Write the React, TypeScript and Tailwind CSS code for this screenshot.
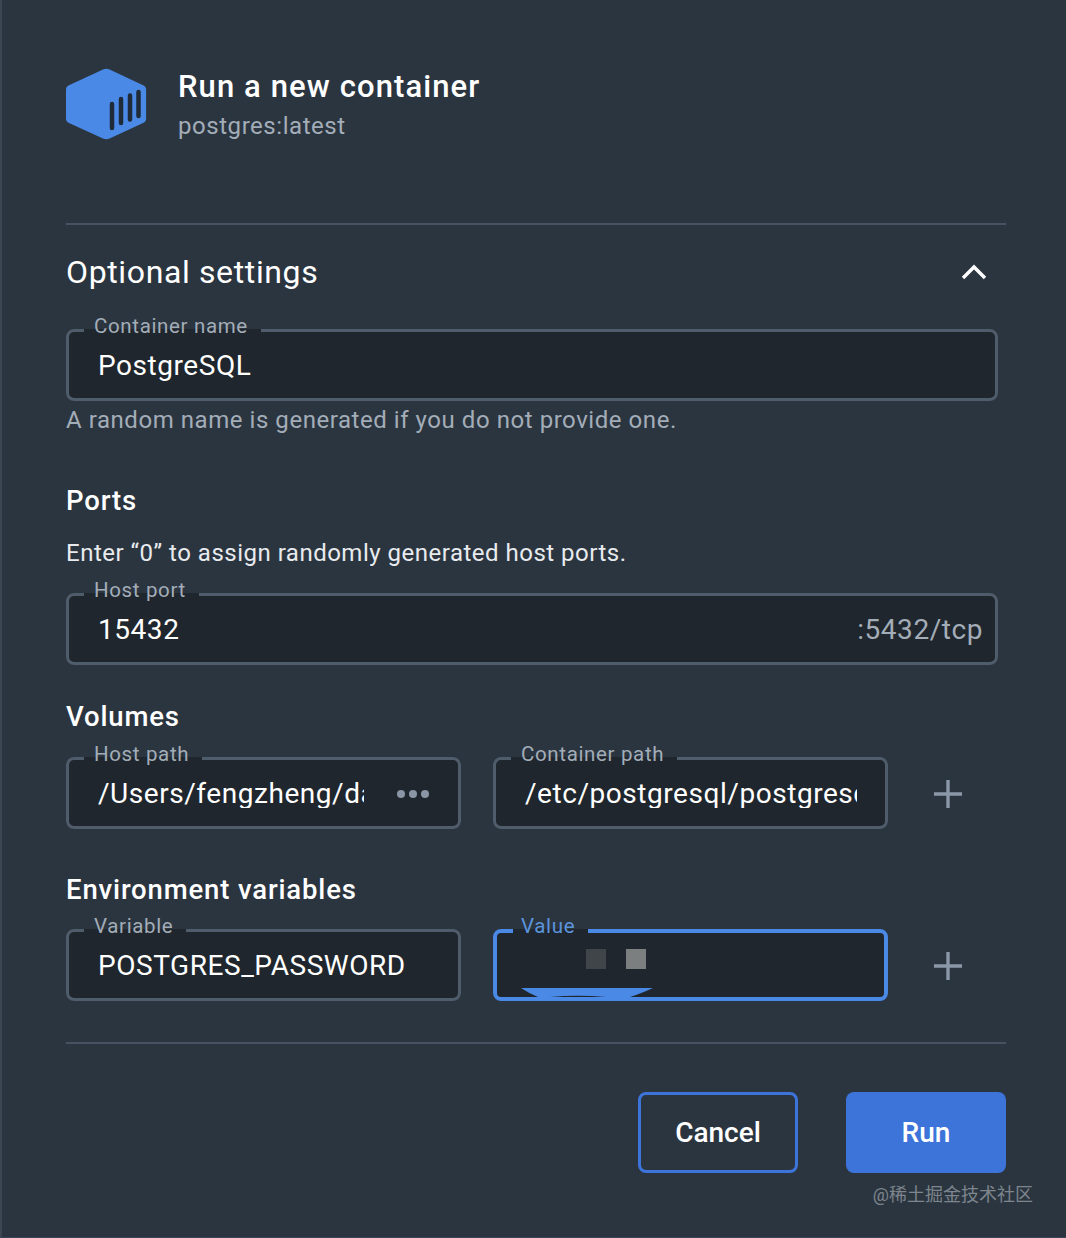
import { ReactNode } from "react";

function Field({
  label,
  children,
  focused = false,
  className = "",
}: {
  label: string;
  children: ReactNode;
  focused?: boolean;
  className?: string;
}) {
  return (
    <fieldset
      className={`h-[83px] min-w-0 rounded-lg bg-[#1f262d] ${
        focused ? "border-[4px] border-[#4a8ae6] px-[28px]" : "border-[3px] border-[#4f5c6b] px-[29px]"
      } ${className}`}
    >
      <legend
        className={`pr-[13px] text-[20.5px] leading-[16px] tracking-[0.65px] ${
          focused ? "ml-[-12px] h-[26px] pl-[8px] text-[#5b94dc]" : "ml-[-14px] h-[25px] pl-[10px] text-[#a3adb8]"
        }`}
      >
        {label}
      </legend>
      <div className="flex h-[46px] items-center text-[28px] leading-none tracking-[0.55px] text-white">
        {children}
      </div>
    </fieldset>
  );
}

function Plus() {
  return (
    <svg width="30" height="30" viewBox="0 0 30 30" className="ml-[45px] shrink-0">
      <path d="M15 1v28M1 15h28" stroke="#8b98a8" strokeWidth="3.4" />
    </svg>
  );
}

function ContainerIcon() {
  return (
    <svg width="81" height="72" viewBox="0 0 81 72" className="shrink-0">
      <path
        d="M37 1.6a8 8 0 0 1 6.6 0l33.5 15.6a5 5 0 0 1 3 4.6v28.6a5 5 0 0 1-3 4.6L43.6 70.4a8 8 0 0 1-6.6 0L3 55a5 5 0 0 1-3-4.6V21.8a5 5 0 0 1 3-4.6z"
        fill="#4a8ae6"
      />
      <g stroke="#1f2b38" strokeWidth="4.5" strokeLinecap="round">
        <path d="M46 36v24M55 31v24M64 27.5v24M72.5 24v24" />
      </g>
    </svg>
  );
}

export default function App() {
  return (
    <div className="h-[1238px] w-[1066px] overflow-hidden border-b border-l-2 border-[#3c4551] bg-[#2b3540] pl-[64px] pr-[60px] font-['Roboto',sans-serif] text-white">
      <div className="flex h-[225px] border-b-2 border-[#465261] pt-[68px]">
        <ContainerIcon />
        <div className="ml-[31px]">
          <div className="text-[31px] font-medium leading-[38px] tracking-[1.1px]">
            Run a new container
          </div>
          <div className="mt-[3px] text-[24px] leading-[34px] tracking-[0.55px] text-[#a3adb8]">
            postgres:latest
          </div>
        </div>
      </div>

      <div className="mt-[25px] flex h-[44px] items-center justify-between">
        <span className="text-[32px] leading-none tracking-[0.63px]">Optional settings</span>
        <svg width="26" height="16" viewBox="0 0 26 16" className="mr-[19px]">
          <path d="M2 14 13 3l11 11" fill="none" stroke="white" strokeWidth="3.4" />
        </svg>
      </div>

      <div className="w-[932px]">
        <Field label="Container name" className="mt-[24px]">
          PostgreSQL
        </Field>
        <p className="mt-[2px] text-[24px] leading-[34px] tracking-[0.55px] text-[#a3adb8]">
          A random name is generated if you do not provide one.
        </p>

        <h2 className="mt-[46px] text-[27.5px] font-medium leading-[36px] tracking-[0.85px]">Ports</h2>
        <p className="mt-[17px] text-[24px] leading-[34px] tracking-[0.5px] text-[#e8ebee]">
          Enter “0” to assign randomly generated host ports.
        </p>
        <Field label="Host port" className="mt-[12px]">
          <span>15432</span>
          <span className="ml-auto mr-[-17px] text-[#a3adb8]">:5432/tcp</span>
        </Field>

        <h2 className="mt-[34px] text-[27.5px] font-medium leading-[36px] tracking-[0.85px]">Volumes</h2>
        <div className="mt-[11px] flex items-start">
          <Field label="Host path" className="w-[395px] shrink-0">
            <span className="w-[266px] overflow-hidden whitespace-nowrap">/Users/fengzheng/data</span>
            <span className="ml-auto flex gap-[4px]">
              <i className="size-[8px] rounded-full bg-[#8a96a5]" />
              <i className="size-[8px] rounded-full bg-[#8a96a5]" />
              <i className="size-[8px] rounded-full bg-[#8a96a5]" />
            </span>
          </Field>
          <Field label="Container path" className="ml-[32px] w-[395px] shrink-0">
            <span className="w-[332px] shrink-0 overflow-hidden whitespace-nowrap">/etc/postgresql/postgresql.conf</span>
          </Field>
          <div className="flex h-[83px] items-center pt-[13px]">
            <Plus />
          </div>
        </div>

        <h2 className="mt-[43px] text-[27.5px] font-medium leading-[36px] tracking-[0.85px]">
          Environment variables
        </h2>
        <div className="mt-[10px] flex items-start">
          <Field label="Variable" className="w-[395px] shrink-0">
            POSTGRES_PASSWORD
          </Field>
          <Field label="Value" focused className="relative ml-[32px] w-[395px] shrink-0">
            {/* redaction smudges from the original screenshot */}
            <span className="ml-[61px] mt-[-16px] size-[20px] bg-[#3f4548]" />
            <span className="ml-[20px] mt-[-16px] size-[20px] bg-[#7b7f80]" />
            <svg
              width="132"
              height="9"
              viewBox="0 0 132 10"
              preserveAspectRatio="none"
              className="absolute bottom-0 left-[24px]"
            >
              <path d="M0 0h132Q118 7 109 10H17Q8 6 0 0z" fill="#4a8ae6" />
              <path d="M29 10q28-3 56 0z" fill="#1f262d" />
            </svg>
          </Field>
          <div className="flex h-[83px] items-center pt-[13px]">
            <Plus />
          </div>
        </div>
      </div>

      <div className="mt-[41px] flex justify-end border-t-2 border-[#465261] pt-[48px]">
        <button className="h-[81px] w-[160px] rounded-lg border-[3px] border-[#3d74da] text-[28px] font-medium">
          Cancel
        </button>
        <button className="ml-[48px] h-[81px] w-[160px] rounded-lg bg-[#3d74da] text-[28px] font-medium">
          Run
        </button>
      </div>
      <div className="mr-[-27px] mt-[10px] text-right font-['Roboto','Noto_Sans_CJK_SC',sans-serif] text-[18px] leading-[24px] text-[#7d858d]">
        @稀土掘金技术社区
      </div>
    </div>
  );
}
